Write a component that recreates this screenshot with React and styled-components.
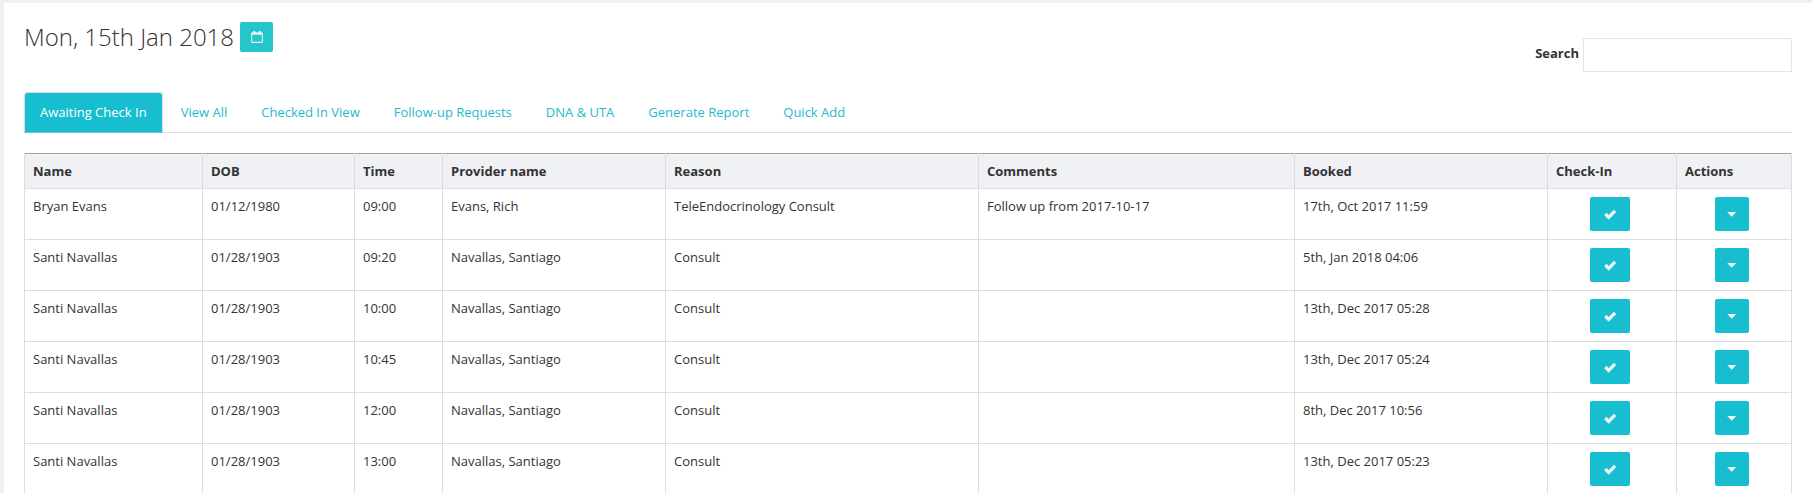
import React from "react";
import styled, { createGlobalStyle } from "styled-components";

const Global = createGlobalStyle`
  *, *::before, *::after { box-sizing: border-box; }
  html, body { margin: 0; background: #f0f1f5; }
  body {
    height: 493px;
    overflow: hidden;
    font-family: "Open Sans", sans-serif;
    font-size: 13px;
    line-height: 18px;
    color: #333;
  }
`;

const Panel = styled.main`
  margin: 3px 0 0 4px;
  padding: 19px 20px 0;
  min-height: 490px;
  background: #fff;
`;

const Header = styled.header`
  display: flex;
  justify-content: space-between;
  align-items: flex-start;
  height: 70px;
`;

const DateGroup = styled.div`
  display: flex;
  align-items: flex-start;
  gap: 7px;
`;

const Title = styled.h1`
  margin: 0;
  width: 209px;
  font-size: 24px;
  font-weight: 300;
  line-height: 30px;
  white-space: nowrap;
`;

const CalendarButton = styled.button`
  display: flex;
  align-items: center;
  justify-content: center;
  width: 33px;
  height: 30px;
  padding: 0;
  border: 0;
  border-radius: 2px;
  background: #24c6c9;
  color: #eef1f5;
`;

const SearchLabel = styled.label`
  display: flex;
  align-items: flex-start;
  gap: 4px;
  margin-top: 16px;
  font-weight: 700;
  line-height: 30px;
`;

const SearchInput = styled.input`
  width: 209px;
  height: 34px;
  padding: 0 10px;
  border: 1px solid #e5e5e5;
  background: #fff;
  font: inherit;
`;

const Tabs = styled.nav`
  display: flex;
  gap: 2px;
  height: 41px;
  border-bottom: 1px solid #ddd;
`;

const Tab = styled.a`
  height: 41px;
  padding: 10px 15px;
  border: 1px solid ${(p) => (p.$active ? "#ddd" : "transparent")};
  border-bottom-color: ${(p) => (p.$active ? "#5fc9d6" : "transparent")};
  border-radius: 3px 3px 0 0;
  background: ${(p) => (p.$active ? "#17bed0" : "transparent")};
  background-clip: padding-box;
  color: ${(p) => (p.$active ? "#fff" : "#1fbacb")};
  white-space: nowrap;
`;

const Table = styled.table`
  width: 1768px;
  margin-top: 20px;
  table-layout: fixed;
  border-spacing: 0;
  border-left: 1px solid #ddd;
`;

const Col = styled.col`
  width: ${(p) => p.$w}px;
`;

const HeadCell = styled.th`
  height: 36px;
  padding: 1px 8px 0;
  border: solid #ddd;
  border-width: 0 1px 1px 0;
  box-shadow: inset 0 1px #a0a1a4;
  background: #f0f1f5;
  font-weight: 700;
  text-align: left;
`;

const Cell = styled.td`
  height: 51px;
  padding: 8px 8px 0;
  border: solid #ddd;
  border-width: 0 1px 1px 0;
  vertical-align: top;
`;

const ActionSlot = styled.div`
  display: flex;
  justify-content: center;
  padding-right: 4px;
`;

const ActionButton = styled.button`
  display: flex;
  align-items: center;
  justify-content: center;
  width: ${(p) => (p.$compact ? 34 : 40)}px;
  height: 34px;
  padding: ${(p) => (p.$compact ? "1px 0 0" : "1px 0 0")};
  border: 0;
  border-radius: 2px;
  background: #17bed0;
  color: #f0f3f5;
`;

const CalendarIcon = () => (
  <svg width="12" height="12" viewBox="0 0 12 12" fill="none" stroke="currentColor">
    <rect x="0.6" y="2" width="10.8" height="9.4" rx="0.8" strokeWidth="1.1" />
    <path d="M1 2.6H11" strokeWidth="2" />
    <path d="M3.3 0.8V2.8M8.7 0.8V2.8" strokeWidth="2.2" strokeLinecap="round" />
  </svg>
);

const CheckIcon = () => (
  <svg width="12" height="11" viewBox="0 0 12 11" fill="none" stroke="currentColor">
    <path d="M1.3 5L4.7 8.4L11 1.9" strokeWidth="3.2" />
  </svg>
);

const CaretIcon = () => (
  <svg width="10" height="5" viewBox="0 0 10 5" fill="currentColor">
    <path d="M0.2 0H9.2L4.7 4.8Z" />
  </svg>
);

const tabs = ["Awaiting Check In", "View All", "Checked In View", "Follow-up Requests", "DNA & UTA", "Generate Report", "Quick Add"];

const columns = [
  ["Name", 178],
  ["DOB", 152],
  ["Time", 88],
  ["Provider name", 223],
  ["Reason", 313],
  ["Comments", 316],
  ["Booked", 253],
  ["Check-In", 129],
  ["Actions", 115],
];

const santi = (time, booked) => ["Santi Navallas", "01/28/1903", time, "Navallas, Santiago", "Consult", "", booked];

const rows = [
  ["Bryan Evans", "01/12/1980", "09:00", "Evans, Rich", "TeleEndocrinology Consult", "Follow up from 2017-10-17", "17th, Oct 2017 11:59"],
  santi("09:20", "5th, Jan 2018 04:06"),
  santi("10:00", "13th, Dec 2017 05:28"),
  santi("10:45", "13th, Dec 2017 05:24"),
  santi("12:00", "8th, Dec 2017 10:56"),
  santi("13:00", "13th, Dec 2017 05:23"),
];

export default function App() {
  return (
    <>
      <Global />
      <Panel>
        <Header>
          <DateGroup>
            <Title>Mon, 15th Jan 2018</Title>
            <CalendarButton aria-label="Choose date"><CalendarIcon /></CalendarButton>
          </DateGroup>
          <SearchLabel>
            Search
            <SearchInput />
          </SearchLabel>
        </Header>
        <Tabs>
          {tabs.map((t, i) => (
            <Tab key={t} $active={i === 0}>{t}</Tab>
          ))}
        </Tabs>
        <Table>
          <colgroup>
            {columns.map(([name, w]) => <Col key={name} $w={w} />)}
          </colgroup>
          <thead>
            <tr>{columns.map(([name]) => <HeadCell key={name}>{name}</HeadCell>)}</tr>
          </thead>
          <tbody>
            {rows.map((r) => (
              <tr key={r[2]}>
                {r.map((v, i) => <Cell key={i}>{v}</Cell>)}
                <Cell>
                  <ActionSlot>
                    <ActionButton aria-label="Check in"><CheckIcon /></ActionButton>
                  </ActionSlot>
                </Cell>
                <Cell>
                  <ActionSlot>
                    <ActionButton $compact aria-label="Actions"><CaretIcon /></ActionButton>
                  </ActionSlot>
                </Cell>
              </tr>
            ))}
          </tbody>
        </Table>
      </Panel>
    </>
  );
}
